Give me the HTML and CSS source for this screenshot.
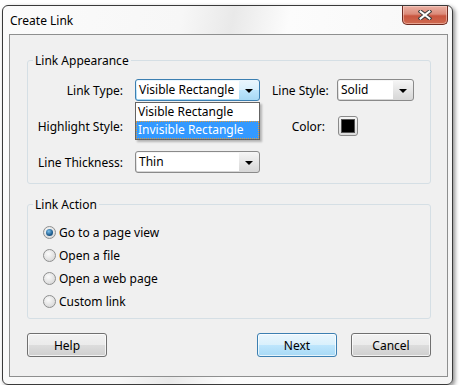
FILE: index.html
```html
<!doctype html>
<html lang="en">
  <head>
    <meta charset="UTF-8" />
    <title>Create Link</title>
    <link rel="stylesheet" href="styles.css">
  </head>
  <body>
    <div class="window">
      <div class="titlebar">
        <span class="title">Create Link</span>
        <button class="close-btn" aria-label="Close">
          <svg width="14" height="10" viewBox="0 0 14 10">
            <path d="M2.5 1.5 L11.5 8.5 M11.5 1.5 L2.5 8.5" stroke="#3a3a3a" stroke-width="4" stroke-linecap="square" fill="none" />
            <path d="M2.5 1.5 L11.5 8.5 M11.5 1.5 L2.5 8.5" stroke="#ffffff" stroke-width="2" stroke-linecap="square" fill="none" />
          </svg>
        </button>
      </div>
      <div class="client">
        <fieldset class="group appearance">
          <legend>Link Appearance</legend>
          <div class="grid">
            <label class="lbl">Link Type:</label>
            <div class="combo-cell">
              <div class="combo focused">
                <span class="combo-text">Visible Rectangle</span>
                <span class="combo-arrow"></span>
              </div>
              <ul class="dropdown">
                <li>Visible Rectangle</li>
                <li class="selected">Invisible Rectangle</li>
              </ul>
            </div>
            <label class="lbl">Line Style:</label>
            <div class="combo">
              <span class="combo-text">Solid</span>
              <span class="combo-arrow"></span>
            </div>

            <label class="lbl">Highlight Style:</label>
            <div></div>
            <label class="lbl">Color:</label>
            <div class="swatch"><span class="swatch-fill"></span></div>

            <label class="lbl">Line Thickness:</label>
            <div class="combo">
              <span class="combo-text">Thin</span>
              <span class="combo-arrow"></span>
            </div>
          </div>
        </fieldset>

        <fieldset class="group action">
          <legend>Link Action</legend>
          <div class="radios">
            <div class="radio-row"><span class="radio checked"></span>Go to a page view</div>
            <div class="radio-row"><span class="radio"></span>Open a file</div>
            <div class="radio-row"><span class="radio"></span>Open a web page</div>
            <div class="radio-row"><span class="radio"></span>Custom link</div>
          </div>
        </fieldset>

        <div class="buttons">
          <button class="btn">Help</button>
          <button class="btn default next">Next</button>
          <button class="btn">Cancel</button>
        </div>
      </div>
    </div>
  </body>
</html>
```

FILE: styles.css
```css
body {
  margin: 0;
  background: #ffffff;
  font-family: "Noto Sans", "Open Sans", sans-serif;
  font-size: 12px;
  line-height: 15px;
  color: #000;
}
.window {
  margin: 5px 0 0 2px;
  width: 449px;
  height: 378px;
  border: 1px solid #3a3a3a;
  border-radius: 6px;
  background: linear-gradient(100deg, #fbfbfb 0%, #f7f7f7 35%, #e9e9e9 45%, #fcfcfc 56%, #f5f5f5 100%);
  box-shadow: 2px 2px 4px rgba(0, 0, 0, 0.45);
  display: flex;
  flex-direction: column;
}
.titlebar {
  height: 28px;
  display: flex;
  justify-content: space-between;
  align-items: flex-start;
}
.title {
  margin: 7px 0 0 7px;
}
.close-btn {
  width: 46px;
  height: 19px;
  margin-right: 4px;
  padding: 0;
  border: 1px solid #6e2a20;
  border-top: none;
  border-radius: 0 0 5px 5px;
  background: linear-gradient(#eab0a3, #dc8a79 45%, #c9553f 55%, #cf6a50);
  box-shadow: inset 0 0 0 1px rgba(255, 220, 210, 0.5);
  display: flex;
  align-items: center;
  justify-content: center;
}
.client {
  margin-left: 6px;
  width: 404px;
  height: 341px;
  border: 1px solid #8e8f8f;
  background: #f0f0f0;
  padding: 0 16px 0 17px;
  display: flex;
  flex-direction: column;
}
.group {
  margin: 0;
  padding: 0;
  border: 1px solid #d5dfe5;
  border-radius: 3px;
  min-width: 0;
}
.group legend {
  margin-left: 5px;
  padding: 0 2px;
}
.appearance {
  margin-top: 18px;
}
.grid {
  display: grid;
  grid-template-columns: 95px 125px 53px 77px;
  grid-template-rows: 22px 22px 22px;
  column-gap: 12px;
  row-gap: 14px;
  align-items: center;
  padding: 11px 0 10px;
}
.lbl {
  text-align: right;
  white-space: nowrap;
}
.combo-cell {
  position: relative;
}
.combo {
  height: 22px;
  box-sizing: border-box;
  border: 1px solid #8a8a8a;
  border-radius: 3px;
  background: linear-gradient(#f6f6f6, #e6e6e6 50%, #d6d6d6 100%);
  display: flex;
  padding: 1px;
}
.combo-text {
  flex: 1;
  background: #fff;
  padding-left: 2px;
  line-height: 18px;
  margin-right: 1px;
}
.combo-arrow {
  width: 18px;
  position: relative;
}
.combo-arrow::after {
  content: "";
  position: absolute;
  left: 5px;
  top: 8px;
  border-left: 4px solid transparent;
  border-right: 4px solid transparent;
  border-top: 4px solid #000;
}
.combo.focused {
  border-color: #3c7fb1;
  background: linear-gradient(#eaf6fd, #d9f0fc 50%, #bee6fd 50%, #a7d9f5);
}
.dropdown {
  position: absolute;
  left: 0;
  top: 100%;
  width: 125px;
  box-sizing: border-box;
  margin: 1px 0 0;
  padding: 0;
  list-style: none;
  background: #fff;
  border: 1px solid #646464;
  box-shadow: 2px 2px 2px rgba(0, 0, 0, 0.25);
  z-index: 2;
}
.dropdown li {
  line-height: 18px;
  padding-left: 2px;
}
.dropdown li.selected {
  background: #3399ff;
  color: #fff;
  outline: 1px dotted #e09a3c;
  outline-offset: -1px;
}
.swatch {
  width: 20px;
  height: 20px;
  box-sizing: border-box;
  margin-left: 1px;
  border: 1px solid #8a8a8a;
  border-radius: 3px;
  background: linear-gradient(#f6f6f6, #dcdcdc);
  display: flex;
  align-items: center;
  justify-content: center;
}
.swatch-fill {
  width: 12px;
  height: 12px;
  background: #000;
  border: 1px solid #555;
}
.action {
  margin-top: 13px;
}
.radios {
  display: flex;
  flex-direction: column;
  gap: 8px;
  padding: 13px 0 9px 15px;
}
.radio-row {
  display: flex;
  align-items: center;
  gap: 3px;
}
.radio {
  width: 13px;
  height: 13px;
  box-sizing: border-box;
  border-radius: 50%;
  border: 1px solid #8e8f8f;
  background: radial-gradient(circle at 40% 35%, #fbfbfb, #d8d8d8 80%);
  position: relative;
}
.radio.checked::after {
  content: "";
  position: absolute;
  left: 2px;
  top: 2px;
  width: 7px;
  height: 7px;
  border-radius: 50%;
  background: radial-gradient(circle at 40% 35%, #7ec2ee, #1d5b8c 60%, #123e66);
}
.buttons {
  display: flex;
  gap: 14px;
  margin-top: 14px;
}
.btn {
  width: 80px;
  height: 24px;
  font-family: inherit;
  font-size: 12px;
  color: #000;
  border: 1px solid #707070;
  border-radius: 3px;
  background: linear-gradient(#f2f2f2, #ebebeb 50%, #dddddd 50%, #cfcfcf);
  box-shadow: inset 0 0 0 1px rgba(255, 255, 255, 0.7);
  padding: 0;
}
.btn.default {
  border-color: #3c7fb1;
  background: linear-gradient(#eaf6fd, #d9f0fc 50%, #bee6fd 50%, #a7d9f5);
}
.next {
  margin-left: auto;
}
```
